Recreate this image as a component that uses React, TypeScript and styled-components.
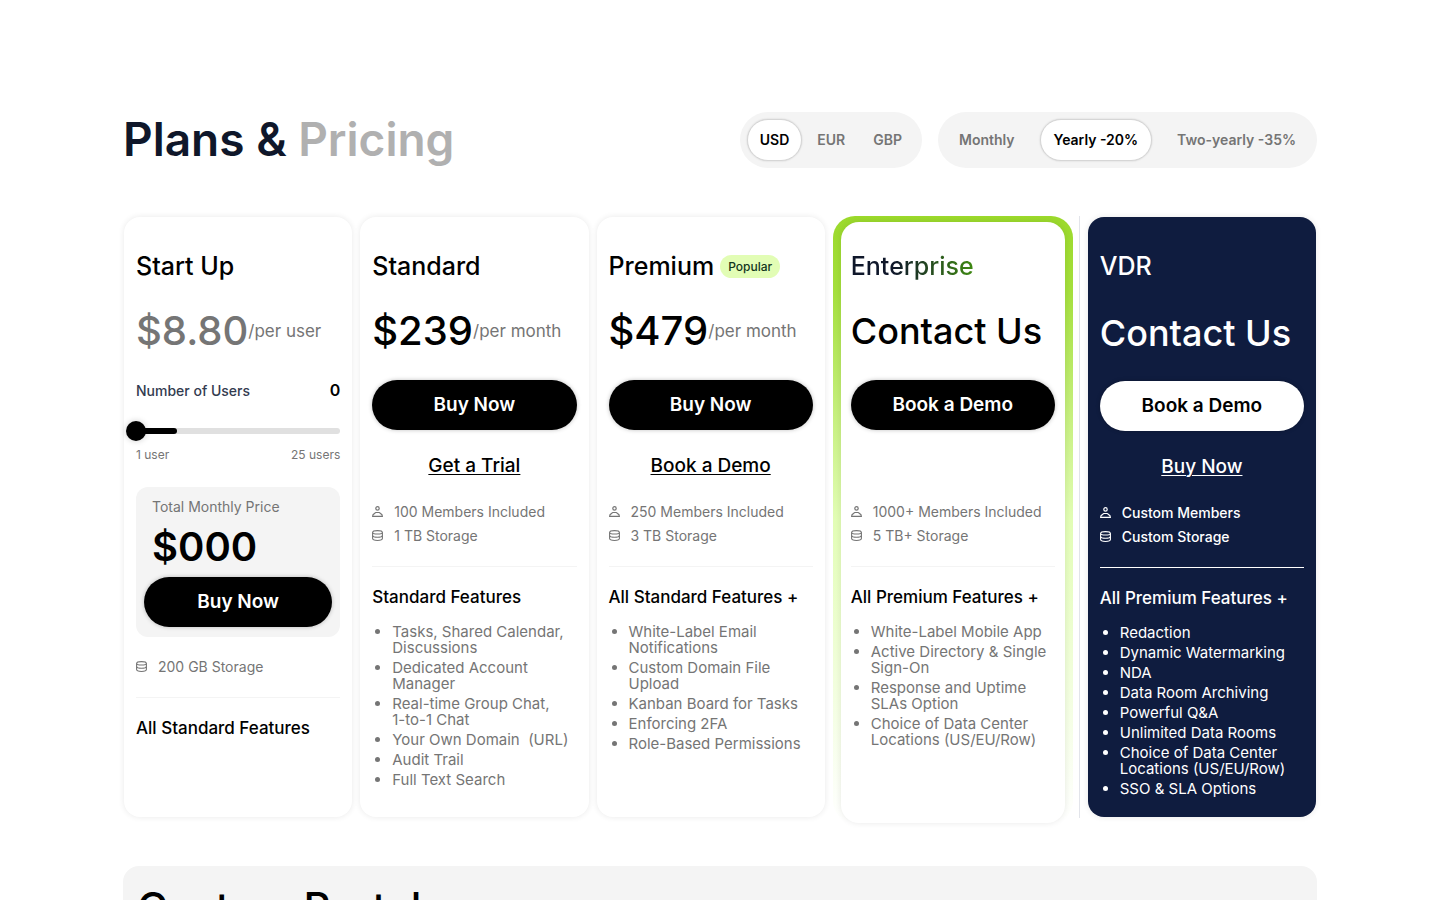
import React, { useState } from "react";
import styled, { createGlobalStyle, css } from "styled-components";

const GlobalStyle = createGlobalStyle`
  *, *::before, *::after { box-sizing: border-box; }
  body {
    margin: 0;
    background: #fff;
    color: #000;
    font-family: Inter, "Open Sans", sans-serif;
    font-size: 14px;
  }
  h1, h2, h3, p, ul { margin: 0; padding: 0; font-weight: 500; }
  button, input { font: inherit; }
`;

const Page = styled.main`
  height: 100vh;
  overflow: hidden;
  padding: 112px 24px 0;
`;

const Container = styled.div`
  max-width: 1194px;
  margin: 0 auto;
`;

const Header = styled.header`
  display: flex;
  align-items: flex-start;
  justify-content: space-between;
  gap: 16px;
  margin-bottom: 48px;
`;

const PageTitle = styled.h1`
  font-size: 46px;
  line-height: 54px;
  font-weight: 600;
  color: #0f172a;
  white-space: nowrap;
  span { color: #b0b0b0; }
`;

const Filters = styled.div`
  display: flex;
  gap: 16px;
`;

const Segment = styled.button<{ $active: boolean }>`
  height: 42px;
  padding: 0 13px 2px;
  border: 1px solid transparent;
  border-radius: 21px;
  background: transparent;
  color: #757575;
  font-size: 14px;
  font-weight: 600;
  white-space: nowrap;
  cursor: pointer;
  ${(p) =>
    p.$active &&
    css`
      background: #fff;
      border-color: #d6d6d6;
      box-shadow: 0 0 2px rgba(0, 0, 0, 0.16);
      color: #000;
    `}
`;

const Segmented = styled.div<{ $compact?: boolean }>`
  display: flex;
  align-items: center;
  gap: ${(p) => (p.$compact ? 2 : 11)}px;
  height: 56px;
  padding: 0 7px;
  border-radius: 28px;
  background: #f4f4f4;
  ${(p) =>
    p.$compact &&
    css`
      ${Segment} { padding: 0 12px 2px; }
    `}
`;

const Plans = styled.section`
  display: flex;
  padding: 0 1px;
  margin-bottom: 48px;
`;

const cardShadow = css`
  box-shadow: 0 0 6px rgba(0, 0, 0, 0.09);
`;

const Card = styled.article`
  flex: 1 1 24px;
  min-width: 0;
  margin: 1px 8px 1px 0;
  padding: 30px 12px 20px;
  border-radius: 16px;
  background: #fff;
  ${cardShadow}
`;

const HighlightFrame = styled.div`
  flex: 0 0 240px;
  display: flex;
  margin: 0 6px -5px 0;
  padding: 6px 8px 0;
  border-radius: 22px;
  background: linear-gradient(180deg, #9bd92b 0%, #a4df3c 12%, #e2fdb5 50%, #fff 100%);
`;

const HighlightCard = styled.article`
  flex: 1;
  min-width: 0;
  padding: 25px 10px 20px;
  border-radius: 18px;
  background: #fff;
  ${cardShadow}
`;

const DividedColumn = styled.div`
  flex: 1 1 33px;
  min-width: 0;
  display: flex;
  padding: 1px 0 1px 8px;
  border-left: 1px solid #e2e4ea;
`;

const DarkCard = styled.article`
  flex: 1;
  min-width: 0;
  padding: 30px 12px 20px;
  border-radius: 16px;
  background: #0f1c3f;
  color: #fff;
  ${cardShadow}
`;

const PlanHead = styled.div`
  display: flex;
  align-items: center;
  gap: 6px;
  height: 38px;
  margin-bottom: 14px;
`;

const PlanName = styled.h2<{ $gradient?: boolean }>`
  font-size: 25px;
  line-height: 38px;
  font-weight: 500;
  ${(p) =>
    p.$gradient &&
    css`
      background: linear-gradient(90deg, #0f172a 35%, #3f8a12 100%);
      background-clip: text;
      -webkit-background-clip: text;
      color: transparent;
    `}
`;

const Tag = styled.span`
  padding: 0 8px;
  border-radius: 12px;
  background: #e2fdb5;
  color: #12351c;
  font-size: 12px;
  line-height: 23px;
  font-weight: 500;
`;

const PriceRow = styled.div<{ $tall?: boolean; $muted?: boolean }>`
  display: flex;
  align-items: center;
  height: ${(p) => (p.$tall ? 68 : 63)}px;
  margin-bottom: ${(p) => (p.$tall ? 14 : 18)}px;
  color: ${(p) => (p.$muted ? "#757575" : "inherit")};
  white-space: nowrap;
`;

const Amount = styled.span<{ $size: number }>`
  font-size: ${(p) => p.$size}px;
  font-weight: 500;
`;

const Unit = styled.span`
  color: #757575;
  font-size: 17px;
`;

const Action = styled.button<{ $light?: boolean }>`
  display: block;
  width: 100%;
  height: 50px;
  padding: 0 0 2px;
  border: 0;
  border-radius: 25px;
  background: ${(p) => (p.$light ? "#fff" : "#000")};
  color: ${(p) => (p.$light ? "#000" : "#fff")};
  font-size: 19px;
  font-weight: 600;
  box-shadow: 0 0 4px rgba(0, 0, 0, 0.25);
  cursor: pointer;
`;

const LinkSlot = styled.div`
  height: 36px;
  margin: 18px 0 15px;
  text-align: center;
  line-height: 36px;
  a {
    color: inherit;
    font-size: 19px;
    font-weight: 500;
    text-underline-offset: 2px;
    text-decoration-thickness: 1px;
  }
`;

const Specs = styled.div<{ $dark?: boolean; $spaced?: boolean }>`
  padding-bottom: 19px;
  margin-top: ${(p) => (p.$spaced ? 17 : 0)}px;
  border-bottom: 1px solid ${(p) => (p.$dark ? "#fff" : "#f4f4f4")};
  color: ${(p) => (p.$dark ? "#fff" : "#757575")};
  font-weight: ${(p) => (p.$dark ? 500 : 400)};
`;

const Spec = styled.p`
  display: flex;
  align-items: center;
  gap: 10px;
  height: 24px;
  font-weight: inherit;
  white-space: nowrap;
  svg { margin-top: 2px; }
`;

const FeatureTitle = styled.h3`
  margin-top: 18px;
  font-size: 17px;
  line-height: 24px;
  white-space: nowrap;
`;

const Features = styled.ul<{ $dark?: boolean }>`
  margin-top: 15px;
  padding-left: 20px;
  color: ${(p) => (p.$dark ? "#fff" : "#757575")};
  font-size: 15px;
  font-weight: 400;
  line-height: 16px;
  li + li { margin-top: 4px; }
  li { white-space: pre-line; }
`;

const UsersRow = styled.div`
  display: flex;
  justify-content: space-between;
  align-items: center;
  height: 20px;
  label { color: #333b4f; font-weight: 500; }
  output { font-size: 16px; font-weight: 600; }
`;

const Slider = styled.div`
  display: grid;
  align-items: center;
  height: 20px;
  margin-top: 21px;
`;

const Track = styled.div`
  grid-area: 1 / 1;
  height: 6px;
  border-radius: 3px;
  background: #e0e0e0;
`;

const TrackFill = styled.div`
  width: 20%;
  height: 100%;
  border-radius: 3px;
  background: #000;
`;

const Range = styled.input`
  grid-area: 1 / 1;
  appearance: none;
  height: 20px;
  margin: 0 -10px;
  background: transparent;
  cursor: pointer;
  &::-webkit-slider-thumb {
    appearance: none;
    width: 20px;
    height: 20px;
    border-radius: 50%;
    background: #000;
    box-shadow: 0 0 6px rgba(0, 0, 0, 0.2);
  }
`;

const RangeLabels = styled.div`
  display: flex;
  justify-content: space-between;
  margin: 6px 0 24px;
  color: #757575;
  font-size: 12px;
  line-height: 16px;
`;

const TotalBox = styled.div`
  padding: 10px 8px;
  border-radius: 12px;
  background: #f4f4f4;
`;

const TotalLabel = styled.p`
  padding-left: 8px;
  color: #757575;
  font-weight: 400;
  line-height: 20px;
`;

const TotalValue = styled.p`
  padding-left: 8px;
  font-size: 40px;
  line-height: 60px;
  font-weight: 600;
`;

const PortalSection = styled.section`
  padding: 10px 14px 48px;
  border-radius: 16px;
  background: #f4f4f4;
  h2 {
    font-size: 42px;
    line-height: 64px;
  }
`;

const UserIcon = () => (
  <svg width="12" height="12" viewBox="0 0 12 12" fill="none" stroke="currentColor" strokeWidth="1.2" strokeLinejoin="round" aria-hidden="true">
    <circle cx="5.5" cy="2.4" r="1.7" />
    <path d="M0.6 10.4 C0.6 8.8 1.4 8 2.4 7.6 C3 7.2 3 6.5 3.8 6.5 H7.2 C8 6.5 8 7.2 8.6 7.6 C9.6 8 10.4 8.8 10.4 10.4 Z" />
  </svg>
);

const StorageIcon = () => (
  <svg width="12" height="12" viewBox="0 0 12 12" fill="none" stroke="currentColor" strokeWidth="1.1" aria-hidden="true">
    <path d="M0.6 2.5 C0.6 1.2 2.4 0.6 5.5 0.6 S10.4 1.2 10.4 2.5 S8.6 4 5.5 4 S0.6 3.6 0.6 2.5 Z" />
    <path d="M0.6 2.5 V8.6 C0.6 10 2.4 10.5 5.5 10.5 S10.4 10 10.4 8.6 V2.5" />
    <path d="M0.6 5.6 C0.9 6.8 2.6 7.2 5.5 7.2 S10.1 6.8 10.4 5.6" />
  </svg>
);

interface DetailsProps {
  members?: string;
  storage: string;
  heading: string;
  items?: string[];
  dark?: boolean;
}

const Details = ({ members, storage, heading, items, dark }: DetailsProps) => (
  <>
    <Specs $dark={dark} $spaced={!members}>
      {members && <Spec><UserIcon />{members}</Spec>}
      <Spec><StorageIcon />{storage}</Spec>
    </Specs>
    <FeatureTitle>{heading}</FeatureTitle>
    {items && (
      <Features $dark={dark}>
        {items.map((item) => <li key={item}>{item}</li>)}
      </Features>
    )}
  </>
);

const currencies = ["USD", "EUR", "GBP"];
const periods = ["Monthly", "Yearly -20%", "Two-yearly -35%"];

export default function App() {
  const [currency, setCurrency] = useState("USD");
  const [period, setPeriod] = useState("Yearly -20%");
  const [users, setUsers] = useState(0);

  return (
    <Page>
      <GlobalStyle />
      <Container>
        <Header>
          <PageTitle>Plans &amp; <span>Pricing</span></PageTitle>
          <Filters>
            <Segmented $compact role="group" aria-label="Currency">
              {currencies.map((c) => (
                <Segment key={c} $active={c === currency} aria-pressed={c === currency} onClick={() => setCurrency(c)}>{c}</Segment>
              ))}
            </Segmented>
            <Segmented role="group" aria-label="Billing period">
              {periods.map((p) => (
                <Segment key={p} $active={p === period} aria-pressed={p === period} onClick={() => setPeriod(p)}>{p}</Segment>
              ))}
            </Segmented>
          </Filters>
        </Header>

        <Plans>
          <Card>
            <PlanHead><PlanName>Start Up</PlanName></PlanHead>
            <PriceRow $muted><Amount $size={40}>$8.80</Amount><Unit>/per user</Unit></PriceRow>
            <UsersRow>
              <label htmlFor="users">Number of Users</label>
              <output htmlFor="users">{users}</output>
            </UsersRow>
            <Slider>
              <Track><TrackFill /></Track>
              <Range id="users" type="range" min={0} max={25} value={users} onChange={(e) => setUsers(Number(e.target.value))} />
            </Slider>
            <RangeLabels><span>1 user</span><span>25 users</span></RangeLabels>
            <TotalBox>
              <TotalLabel>Total Monthly Price</TotalLabel>
              <TotalValue>$000</TotalValue>
              <Action>Buy Now</Action>
            </TotalBox>
            <Details storage="200 GB Storage" heading="All Standard Features" />
          </Card>

          <Card>
            <PlanHead><PlanName>Standard</PlanName></PlanHead>
            <PriceRow><Amount $size={40}>$239</Amount><Unit>/per month</Unit></PriceRow>
            <Action>Buy Now</Action>
            <LinkSlot><a href="#trial">Get a Trial</a></LinkSlot>
            <Details
              members="100 Members Included"
              storage="1 TB Storage"
              heading="Standard Features"
              items={[
                "Tasks, Shared Calendar,\nDiscussions",
                "Dedicated Account\nManager",
                "Real-time Group Chat,\n1-to-1 Chat",
                "Your Own Domain \u00a0(URL)",
                "Audit Trail",
                "Full Text Search",
              ]}
            />
          </Card>

          <Card>
            <PlanHead><PlanName>Premium</PlanName><Tag>Popular</Tag></PlanHead>
            <PriceRow><Amount $size={40}>$479</Amount><Unit>/per month</Unit></PriceRow>
            <Action>Buy Now</Action>
            <LinkSlot><a href="#demo">Book a Demo</a></LinkSlot>
            <Details
              members="250 Members Included"
              storage="3 TB Storage"
              heading="All Standard Features +"
              items={[
                "White-Label Email\nNotifications",
                "Custom Domain File\nUpload",
                "Kanban Board for Tasks",
                "Enforcing 2FA",
                "Role-Based Permissions",
              ]}
            />
          </Card>

          <HighlightFrame>
            <HighlightCard>
              <PlanHead><PlanName $gradient>Enterprise</PlanName></PlanHead>
              <PriceRow><Amount $size={36}>Contact Us</Amount></PriceRow>
              <Action>Book a Demo</Action>
              <LinkSlot />
              <Details
                members="1000+ Members Included"
                storage="5 TB+ Storage"
                heading="All Premium Features +"
                items={[
                  "White-Label Mobile App",
                  "Active Directory & Single\nSign-On",
                  "Response and Uptime\nSLAs Option",
                  "Choice of Data Center\nLocations (US/EU/Row)",
                ]}
              />
            </HighlightCard>
          </HighlightFrame>

          <DividedColumn>
            <DarkCard>
              <PlanHead><PlanName>VDR</PlanName></PlanHead>
              <PriceRow $tall><Amount $size={36}>Contact Us</Amount></PriceRow>
              <Action $light>Book a Demo</Action>
              <LinkSlot><a href="#buy">Buy Now</a></LinkSlot>
              <Details
                dark
                members="Custom Members"
                storage="Custom Storage"
                heading="All Premium Features +"
                items={[
                  "Redaction",
                  "Dynamic Watermarking",
                  "NDA",
                  "Data Room Archiving",
                  "Powerful Q&A",
                  "Unlimited Data Rooms",
                  "Choice of Data Center\nLocations (US/EU/Row)",
                  "SSO & SLA Options",
                ]}
              />
            </DarkCard>
          </DividedColumn>
        </Plans>

        <PortalSection>
          <h2>Custom Portal</h2>
        </PortalSection>
      </Container>
    </Page>
  );
}
